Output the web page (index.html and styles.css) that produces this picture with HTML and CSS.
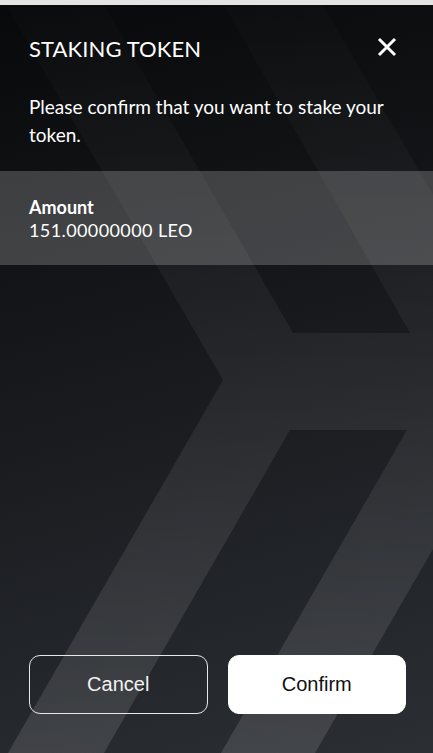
FILE: index.html
```html
<!DOCTYPE html>
<html lang="en">
<head>
    <meta charset="UTF-8">
    <meta name="viewport" content="width=device-width, initial-scale=1.0">
    <title>Staking Token</title>
    <link rel="stylesheet" href="styles.css">
</head>
<body>
    <div class="top-bar"></div>
    <div class="modal">
        <svg class="modal-bg" viewBox="0 5 433 748" preserveAspectRatio="none">
            <defs>
                <linearGradient id="shade" gradientUnits="userSpaceOnUse" x1="0" y1="5" x2="0" y2="753">
                    <stop offset="0" stop-color="#fff" stop-opacity="0.01"/>
                    <stop offset="0.35" stop-color="#fff" stop-opacity="0.04"/>
                    <stop offset="1" stop-color="#fff" stop-opacity="0.12"/>
                </linearGradient>
            </defs>
            <polygon fill="url(#shade)" points="6,5 104,5 293,333 410,333 224,5 323,5 433,195 433,549 315,753 221,753 407,430 290,430 104,753 8,753 223,380"/>
        </svg>

        <div class="modal-head">
            <p class="modal-title">STAKING TOKEN</p>
            <button class="close-btn" type="button">
                <svg width="20" height="20" viewBox="0 0 20 20">
                    <path d="M2 2 L18 18 M18 2 L2 18" stroke="#fff" stroke-width="3" fill="none"/>
                </svg>
            </button>
        </div>

        <p class="modal-text">Please confirm that you want to stake your token.</p>

        <div class="amount-box">
            <p class="amount-label">Amount</p>
            <p class="amount-value">151.00000000 LEO</p>
        </div>

        <div class="modal-actions">
            <button class="btn btn-cancel" type="button">Cancel</button>
            <button class="btn btn-confirm" type="button">Confirm</button>
        </div>
    </div>
</body>
</html>
```

FILE: styles.css
```css
body {
    margin: 0;
    background: #e4e4e4;
    font-family: Lato, "Noto Sans", sans-serif;
    color: #fff;
}

.top-bar {
    height: 5px;
    background: #e4e4e4;
}

.modal {
    position: relative;
    height: 748px;
    display: flex;
    flex-direction: column;
    overflow: hidden;
    background: linear-gradient(165deg, #08090a 0%, #131518 35%, #2b2e33 100%);
}

.modal-bg {
    position: absolute;
    top: 0;
    left: 0;
    width: 100%;
    height: 100%;
}

.modal-head,
.modal-text,
.amount-box,
.modal-actions {
    position: relative;
}

.modal-head {
    display: flex;
    justify-content: space-between;
    align-items: center;
    padding: 31px 36px 0 29px;
}

.modal-title {
    margin: 0;
    font-size: 22px;
    line-height: 26px;
    font-weight: normal;
    letter-spacing: 0.1px;
}

.close-btn {
    width: 20px;
    height: 20px;
    padding: 0;
    margin-top: -4px;
    border: none;
    background: none;
    cursor: pointer;
}

.close-btn svg {
    display: block;
}

.modal-text {
    margin: 31px 0 0;
    padding: 0 29px;
    font-size: 19px;
    line-height: 28px;
}

.amount-box {
    margin-top: 22px;
    padding: 25px 29px 23px;
    background: rgba(255,255,255,.2);
}

.amount-box p {
    margin: 0;
    line-height: 23px;
}

.amount-label {
    font-size: 18px;
    font-weight: bold;
}

.amount-value {
    font-size: 18px;
    letter-spacing: 0.4px;
}

.modal-actions {
    margin-top: auto;
    display: flex;
    gap: 20px;
    padding: 0 27px 39px 29px;
}

.btn {
    flex: 1;
    height: 59px;
    border-radius: 11px;
    font-family: "Liberation Sans", Arial, sans-serif;
    font-size: 20px;
    cursor: pointer;
}

.btn-cancel {
    background: transparent;
    border: 1px solid #e8e8e8;
    color: #f2f2f2;
}

.btn-confirm {
    background: #fff;
    border: 1px solid #fff;
    color: #111;
}
```
